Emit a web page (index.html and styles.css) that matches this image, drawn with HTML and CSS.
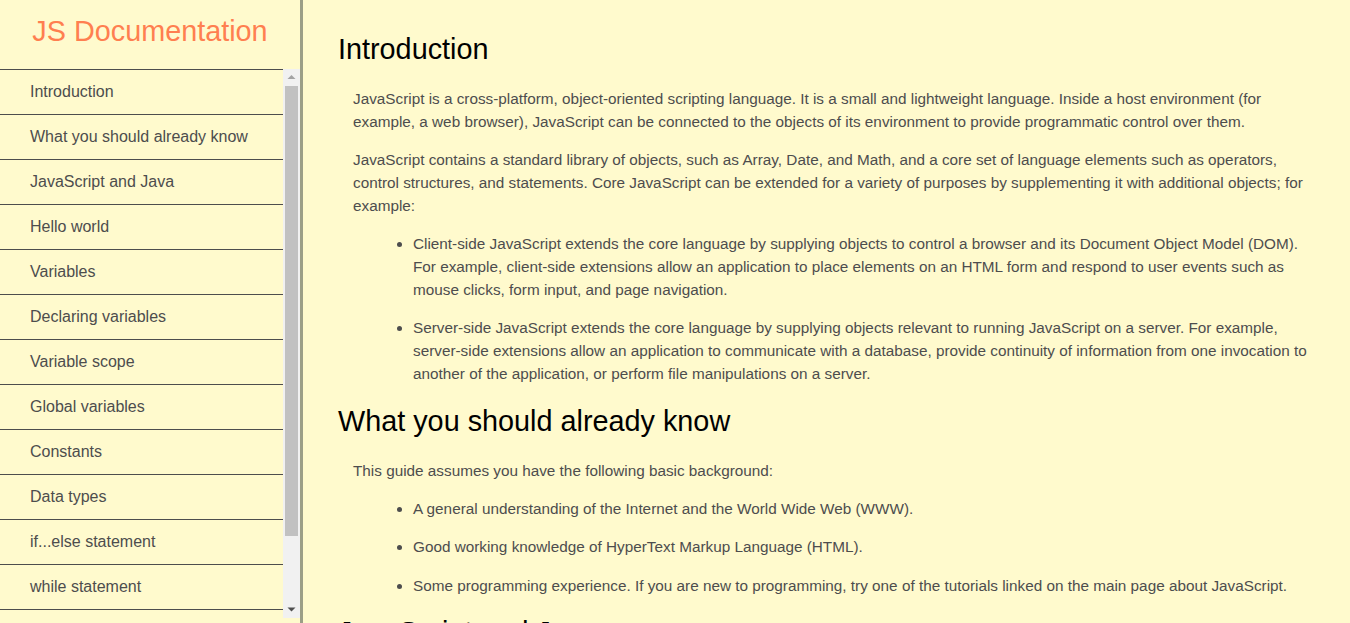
FILE: index.html
```html
<!DOCTYPE html>
<html lang="en">
<head>
<meta charset="utf-8">
<title>JS Documentation</title>
<link rel="stylesheet" href="styles.css">
</head>
<body>
<nav class="navbar">
  <header class="brand">JS Documentation</header>
  <div class="nav-scroller">
    <ul class="nav-list">
      <li><a class="nav-link" href="#Introduction">Introduction</a></li>
      <li><a class="nav-link" href="#What_you_should_already_know">What you should already know</a></li>
      <li><a class="nav-link" href="#JavaScript_and_Java">JavaScript and Java</a></li>
      <li><a class="nav-link" href="#Hello_world">Hello world</a></li>
      <li><a class="nav-link" href="#Variables">Variables</a></li>
      <li><a class="nav-link" href="#Declaring_variables">Declaring variables</a></li>
      <li><a class="nav-link" href="#Variable_scope">Variable scope</a></li>
      <li><a class="nav-link" href="#Global_variables">Global variables</a></li>
      <li><a class="nav-link" href="#Constants">Constants</a></li>
      <li><a class="nav-link" href="#Data_types">Data types</a></li>
      <li><a class="nav-link" href="#if...else_statement">if...else statement</a></li>
      <li><a class="nav-link" href="#while_statement">while statement</a></li>
      <li><a class="nav-link" href="#Function_declarations">Function declarations</a></li>
      <li><a class="nav-link" href="#Reference">Reference</a></li>
    </ul>
    <div class="scrollbar" aria-hidden="true">
      <div class="sb-button">
        <svg width="17" height="17" viewBox="0 0 17 17"><polygon points="4.5,10 8.5,6 12.5,10" fill="#a3a3a3"/></svg>
      </div>
      <div class="sb-track"><div class="sb-thumb"></div></div>
      <div class="sb-button">
        <svg width="17" height="17" viewBox="0 0 17 17"><polygon points="4.5,6.5 12.5,6.5 8.5,10.5" fill="#505050"/></svg>
      </div>
    </div>
  </div>
</nav>
<main class="main-doc">
  <section class="main-section" id="Introduction">
    <header class="section-title">Introduction</header>
    <article class="section-body">
      <p>JavaScript is a cross-platform, object-oriented scripting language. It is a small and lightweight language. Inside a host environment (for example, a web browser), JavaScript can be connected to the objects of its environment to provide programmatic control over them.</p>
      <p>JavaScript contains a standard library of objects, such as Array, Date, and Math, and a core set of language elements such as operators, control structures, and statements. Core JavaScript can be extended for a variety of purposes by supplementing it with additional objects; for example:</p>
      <ul>
        <li>Client-side JavaScript extends the core language by supplying objects to control a browser and its Document Object Model (DOM). For example, client-side extensions allow an application to place elements on an HTML form and respond to user events such as mouse clicks, form input, and page navigation.</li>
        <li>Server-side JavaScript extends the core language by supplying objects relevant to running JavaScript on a server. For example, server-side extensions allow an application to communicate with a database, provide continuity of information from one invocation to another of the application, or perform file manipulations on a server.</li>
      </ul>
    </article>
  </section>
  <section class="main-section" id="What_you_should_already_know">
    <header class="section-title">What you should already know</header>
    <article class="section-body">
      <p>This guide assumes you have the following basic background:</p>
      <ul>
        <li>A general understanding of the Internet and the World Wide Web (WWW).</li>
        <li>Good working knowledge of HyperText Markup Language (HTML).</li>
        <li>Some programming experience. If you are new to programming, try one of the tutorials linked on the main page about JavaScript.</li>
      </ul>
    </article>
  </section>
  <section class="main-section" id="JavaScript_and_Java">
    <header class="section-title">JavaScript and Java</header>
    <article class="section-body">
      <p>JavaScript and Java are similar in some ways but fundamentally different in some others. The JavaScript language resembles Java but does not have Java's static typing and strong type checking.</p>
    </article>
  </section>
</main>
</body>
</html>
```

FILE: styles.css
```css
html, body {
  margin: 0;
  padding: 0;
  height: 100%;
  overflow: hidden;
}

body {
  display: flex;
  background: #fffacd;
  font-family: "Liberation Sans", Arial, sans-serif;
}

.navbar {
  flex: 0 0 300px;
  width: 300px;
  height: 100vh;
  border-right: 3px solid #9b9e86;
  display: flex;
  flex-direction: column;
}

.brand {
  height: 69px;
  flex: 0 0 69px;
  box-sizing: border-box;
  padding-top: 15px;
  text-align: center;
  font-size: 28.8px;
  color: #ff7f50;
}

.nav-scroller {
  display: flex;
  height: 549px;
  flex: 0 0 549px;
}

.nav-list {
  flex: 1;
  list-style: none;
  margin: 0;
  padding: 0;
  overflow: hidden;
}

.nav-list li {
  border-bottom: 1px solid #4d4d4d;
}

.nav-list li:first-child {
  border-top: 1px solid #4d4d4d;
}

.nav-link {
  display: flex;
  align-items: center;
  height: 44px;
  padding-left: 30px;
  font-size: 16px;
  color: #4d4d4d;
  text-decoration: none;
}

.scrollbar {
  flex: 0 0 17px;
  width: 17px;
  display: flex;
  flex-direction: column;
  background: #f1f1f1;
}

.sb-button {
  flex: 0 0 17px;
  height: 17px;
}

.sb-button svg {
  display: block;
}

.sb-track {
  flex: 1;
}

.sb-thumb {
  height: 450px;
  margin: 0 2px;
  background: #c1c1c1;
}

.main-doc {
  flex: 1;
  height: 100vh;
  overflow: hidden;
  box-sizing: border-box;
  padding: 13.5px 35px 0 35px;
}

.section-title {
  margin: 19.5px 0 21px;
  font-size: 28.8px;
  color: #000;
}

.section-body {
  padding-left: 15px;
  font-size: 15.3px;
  line-height: 23px;
  color: #4d4d4d;
}

.section-body p {
  margin: 0 0 15px;
}

.section-body ul {
  margin: 0;
  padding-left: 60px;
}

.section-body li {
  margin: 0 0 15.4px;
}
```
